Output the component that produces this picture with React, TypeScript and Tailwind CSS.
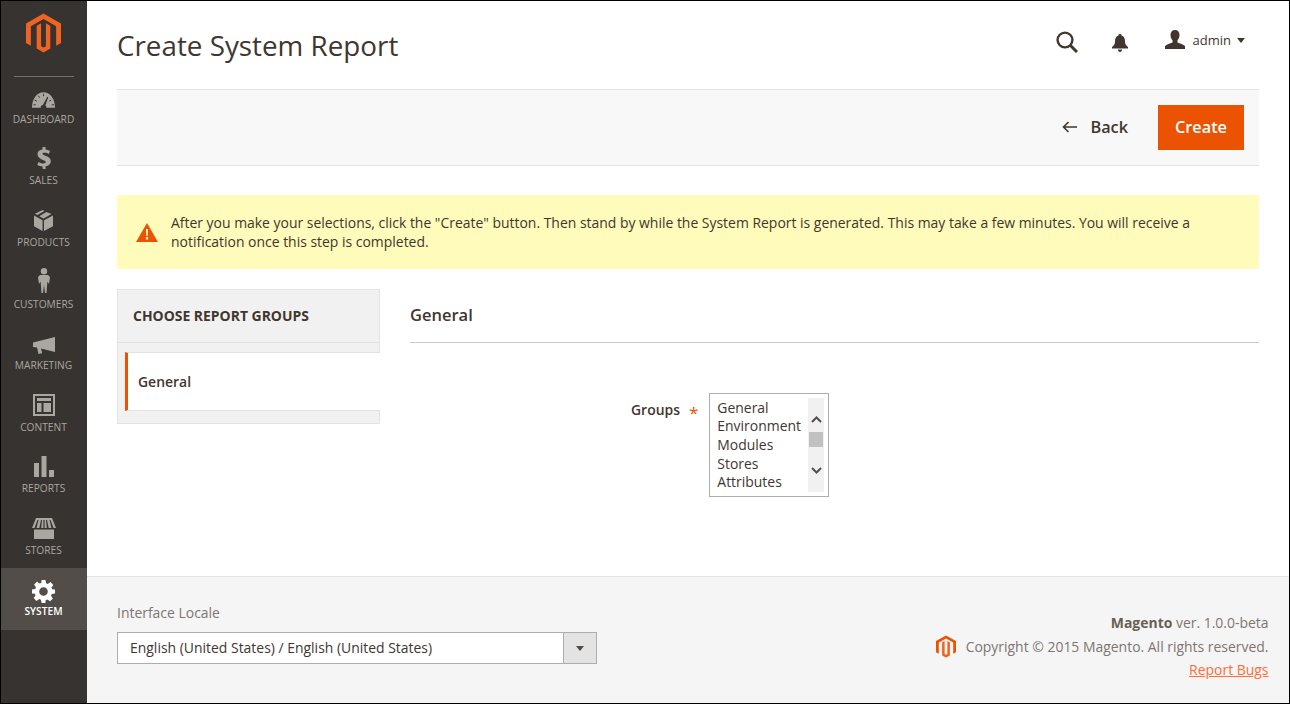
import type { ReactNode } from "react";

const Logo = ({ className, c1 = "#f26322", c2 = "#f26322" }: { className: string; c1?: string; c2?: string }) => (
  <svg viewBox="0 0 36 40" className={className}>
    <path fill={c1} d="M18 0 36 10.2V30.2L31 33V13L18 5.6 5 13V33L0 30.2V10.2Z" />
    <path fill={c2} d="M18 40 11 36V12.5L15.5 10V33.6L18 35 20.5 33.6V10L25 12.5V36Z" />
  </svg>
);

const iconGray = "#aaa6a0";

const navItems: { label: string; h: string; icon: ReactNode }[] = [
  {
    label: "DASHBOARD",
    h: "h-[60px]",
    icon: (
      <svg viewBox="0 0 24 16" className="w-[23px] h-[16px]" fill={iconGray}>
        <path d="M0 16C0 7 5 0 12 0s12 7 12 16H15c0-1-.4-2-1-2.4L17 5l-1-.4-4.600 8.500C9.800 13.400 9 14.600 9 16Z" />
        <g stroke="#373330" strokeWidth="1">
          <path d="M12 1.500v2.500M6.500 3.500 8 5.500M2.800 8 5 9.300M1.500 13H4M20 8l-2 1.200M20.500 13H23" />
        </g>
      </svg>
    ),
  },
  {
    label: "SALES",
    h: "h-[61px]",
    icon: (
      <svg viewBox="0 0 14 22" className="w-[14px] h-[22px]" fill={iconGray}>
        <path d="M5.500 0h3v2.600c1.800.2 3.400.7 4.500 1.400l-1.100 3C10.600 6.200 9 5.700 7.500 5.700c-1.300 0-2 .4-2 1.100 0 .8.900 1.200 3 1.900 3.600 1.200 5.300 2.700 5.300 5.500 0 2.700-1.800 4.600-5.200 5.100V22h-3v-2.500c-2-.1-4-.7-5.300-1.500l1.100-3.100c1.400.8 3.200 1.500 5 1.500 1.500 0 2.400-.5 2.400-1.400 0-.9-.9-1.400-3.100-2.100C2.400 11.300.5 9.900.5 7.200.5 4.800 2.200 3 5.500 2.600Z" />
      </svg>
    ),
  },
  {
    label: "PRODUCTS",
    h: "h-[62px]",
    icon: (
      <svg viewBox="0 0 20 22" className="w-[19px] h-[21px]" fill={iconGray}>
        <path d="M9 0 1 3.800l2.500 1.500L11 1ZM13 2 5.500 6.400 10 9l8.500-4.900ZM0 5.800V17l9 5V10.700ZM20 5.800l-9.500 5V22l9.500-5Z" />
      </svg>
    ),
  },
  {
    label: "CUSTOMERS",
    h: "h-[62px]",
    icon: (
      <svg viewBox="0 0 12 25" className="w-[12px] h-[25px]" fill={iconGray}>
        <circle cx="6" cy="3.200" r="3.200" />
        <path d="M2 7h8l2 2-1 7-1.600-2.500L8.500 25H7l-1-8-1 8H3.500L2.600 13.500 1 16 0 9Z" />
      </svg>
    ),
  },
  {
    label: "MARKETING",
    h: "h-[61px]",
    icon: (
      <svg viewBox="0 0 22 17" className="w-[22px] h-[17px]" fill={iconGray}>
        <path d="M22 0v15L8 11.500l1.200 4.800-3.700.7L4 10.600 0 10V5.500Z" />
      </svg>
    ),
  },
  {
    label: "CONTENT",
    h: "h-[62px]",
    icon: (
      <svg viewBox="0 0 22 22" className="w-[22px] h-[22px]" fill={iconGray}>
        <path
          fillRule="evenodd"
          d="M0 0h22v22H0ZM2 2v18h18V2ZM4 4h14v3H4ZM4 9h4.500v9H4ZM10.500 9H18v9h-7.500Z"
        />
      </svg>
    ),
  },
  {
    label: "REPORTS",
    h: "h-[61px]",
    icon: (
      <svg viewBox="0 0 20 21" className="w-[20px] h-[21px]" fill={iconGray}>
        <path d="M0 7h5v14H0ZM7.500 0h5v21h-5ZM15 14h5v7h-5Z" />
      </svg>
    ),
  },
  {
    label: "STORES",
    h: "h-[62px]",
    icon: (
      <svg viewBox="0 0 24 21" className="w-[24px] h-[21px]" fill={iconGray}>
        <path d="M4 0h16l4 10h-2.500L18.500 2h-1l2 8h-2.800L15 2h-1l.8 8h-2.200V2h-1.200v8H9.200L10 2H9L7.300 10H4.500l2-8h-1l-3 8H0ZM2 11.500h20V21H2Z" />
      </svg>
    ),
  },
];

const Gear = () => (
  <svg viewBox="0 0 24 24" className="w-[23px] h-[23px]" fill="#ffffff">
    <path
      fillRule="evenodd"
      d="M10 0h4l.7 3.400 1.700.7 2.900-1.900 2.900 2.900-1.900 2.900.7 1.700L24 10v4l-3.400.7-.7 1.700 1.900 2.900-2.900 2.900-2.900-1.900-1.700.7L14 24h-4l-.7-3.400-1.700-.7-2.900 1.900-2.900-2.900 1.900-2.900-.7-1.700L0 14v-4l3.400-.7.7-1.700-1.900-2.900 2.900-2.900 2.900 1.900 1.700-.7ZM12 7.500a4.500 4.500 0 1 0 0 9 4.500 4.500 0 0 0 0-9Z"
    />
  </svg>
);

const groups = ["General", "Environment", "Modules", "Stores", "Attributes"];

export default function App() {
  return (
    <div className="w-[1290px] h-[704px] border border-black flex bg-white overflow-hidden font-['Open_Sans',sans-serif] text-[#41362f]">
      <aside className="w-[86px] shrink-0 bg-[#373330] flex flex-col">
        <div className="h-[76px] mx-[13px] border-b border-[#736e69] flex justify-center pt-[12px] pr-[1px]">
          <Logo className="w-[35px] h-[40px]" />
        </div>
        <nav className="flex flex-col">
          {navItems.map((item) => (
            <div key={item.label} className={`${item.h} flex flex-col items-center justify-end pb-[10px] pr-[1px]`}>
              <div className="flex items-end justify-center">{item.icon}</div>
              <span className="text-[10.200px] leading-[16px] text-[#aaa6a0] mt-[3px]">{item.label}</span>
            </div>
          ))}
          <div className="h-[62px] bg-[#524d49] flex flex-col items-center pt-[12px] pr-[1px]">
            <Gear />
            <span className="text-[10.200px] leading-[16px] text-white font-semibold">SYSTEM</span>
          </div>
        </nav>
      </aside>

      <div className="flex-1 flex flex-col min-w-0">
        <main className="flex-1 px-[30px]">
          <header className="h-[88px] flex items-start justify-between">
            <h1 className="text-[27.800px] leading-[38px] mt-[25px] text-[#41362f]">Create System Report</h1>
            <div className="flex items-center mt-[28px] mr-[14px]">
              <svg viewBox="0 0 22 22" className="w-[22px] h-[22px] mt-[2px]" fill="none" stroke="#41362f" strokeWidth="2.400">
                <circle cx="9" cy="9" r="7.400" />
                <path d="m14.500 14.500 6.500 6.500" strokeWidth="3" />
              </svg>
              <svg viewBox="0 0 16 18" className="w-[16px] h-[18px] ml-[34px] mt-[3px]" fill="#41362f">
                <path d="M8 0c1 0 1.500.6 1.500 1.400 2.600.7 3.500 3 3.500 6 0 2.600 1 3.900 3 5.600v1.500H0V13c2-1.700 3-3 3-5.600 0-3 .9-5.300 3.500-6C6.500.6 7 0 8 0ZM6 15.500h4C10 17 9.200 18 8 18s-2-1-2-2.500Z" />
              </svg>
              <svg viewBox="0 0 20 20" className="w-[20px] h-[20px] ml-[37px] mb-[2px]" fill="#41362f">
                <path d="M10 0c3 0 4.500 2 4.500 5 0 2.200-.8 4-2 5.300v2.200c2.500 1.200 6 1.800 7.500 3.500V19H0v-3c1.500-1.700 5-2.300 7.500-3.500v-2.200C6.300 9 5.500 7.200 5.500 5c0-3 1.500-5 4.500-5Z" />
              </svg>
              <span className="text-[13px] leading-[18px] ml-[8px] mb-[2px] text-[#41362f]">admin</span>
              <span className="ml-[6px] mb-[2px] w-0 h-0 border-x-[4px] border-x-transparent border-t-[5px] border-t-[#41362f]" />
            </div>
          </header>

          <div className="h-[77px] bg-[#f8f8f8] border-y border-[#e3e3e3] flex items-center justify-end pr-[15px]">
            <svg viewBox="0 0 15 12" className="w-[15px] h-[12px] mb-[2px]" fill="none" stroke="#41362f" strokeWidth="1.600">
              <path d="M15 6H1.500M6.500 1 1.500 6l5 5" />
            </svg>
            <span className="ml-[13px] pb-[1px] text-[16.300px] font-semibold text-[#41362f] mr-[30px]">Back</span>
            <button className="w-[86px] h-[45px] pb-[1px] bg-[#eb5202] text-white text-[16.300px] font-semibold">Create</button>
          </div>

          <div className="mt-[29px] h-[74px] bg-[#fffbbb] flex items-center pl-[19px] pr-[40px]">
            <svg viewBox="0 0 22 19" className="w-[22px] h-[19px] shrink-0">
              <path fill="#eb5202" d="M11 0 22 19H0Z" />
              <path fill="#fffbbb" d="M9.900 6h2.200l-.4 7h-1.400ZM9.900 14h2.200v2.400H9.900Z" />
            </svg>
            <p className="ml-[13px] text-[13.950px] leading-[19px] text-[#41362f]">
              After you make your selections, click the "Create" button. Then stand by while the System Report is generated. This may take a few minutes. You will receive a notification once this step is completed.
            </p>
          </div>

          <div className="mt-[20px] flex">
            <div className="w-[263px] shrink-0 h-[135px] bg-[#f1f1f1] border border-[#e3e3e3] flex flex-col">
              <div className="h-[53px] flex items-center pl-[15px] text-[13.950px] font-bold text-[#41362f] border-b border-[#e3e3e3]">
                CHOOSE REPORT GROUPS
              </div>
              <div className="mt-[9px] ml-[7px] -mr-[1px] h-[59px] pt-[2px] bg-white border-l-[3px] border-[#eb5202] border-y border-y-[#e3e3e3] flex items-center pl-[10px] text-[13.950px] font-semibold text-[#41362f]">
                General
              </div>
            </div>

            <div className="ml-[30px] flex-1">
              <div className="h-[54px] border-b border-[#c9c9c9] flex items-start pt-[14px]">
                <h2 className="text-[16.500px] leading-[24px] font-semibold text-[#41362f]">General</h2>
              </div>
              <div className="mt-[50px] flex items-start pl-[221px]">
                <span className="text-[13.950px] leading-[19px] font-semibold mt-[7px]">Groups</span>
                <span className="text-[17px] leading-[19px] text-[#eb5202] ml-[9px] mt-[10px]">*</span>
                <div className="ml-[11px] w-[120px] h-[104px] border border-[#adadad] flex pl-[7px] pt-[4px] pr-[4px]">
                  <ul className="flex-1 text-[13.950px] leading-[18.700px] pt-[0.500px] text-[#41362f]">
                    {groups.map((g) => (
                      <li key={g}>{g}</li>
                    ))}
                  </ul>
                  <div className="w-[16px] h-[94px] bg-[#f1f1f1] flex flex-col items-center">
                    <svg viewBox="0 0 11 7" className="w-[11px] h-[7px] mt-[18px]" fill="none" stroke="#505050" strokeWidth="2">
                      <path d="M1 6 5.500 1.500 10 6" />
                    </svg>
                    <div className="w-[14px] h-[15px] bg-[#c1c1c1] mt-[9px]" />
                    <svg viewBox="0 0 11 7" className="w-[11px] h-[7px] mt-[20px]" fill="none" stroke="#505050" strokeWidth="2">
                      <path d="M1 1 5.500 5.500 10 1" />
                    </svg>
                  </div>
                </div>
              </div>
            </div>
          </div>
        </main>

        <footer className="h-[127px] shrink-0 bg-[#f5f5f5] border-t border-[#e3e3e3] pl-[30px] pr-[20.500px] flex justify-between">
          <div className="pt-[26px]">
            <div className="text-[13.950px] leading-[19px] text-[#7d7671]">Interface Locale</div>
            <div className="mt-[10px] w-[480px] h-[32px] bg-white border border-[#adadad] flex">
              <span className="flex-1 pl-[12px] text-[13.950px] leading-[30px] text-[#41362f]">
                English (United States) / English (United States)
              </span>
              <span className="w-[33px] bg-[#e3e3e3] border-l border-[#adadad] flex items-center justify-center">
                <span className="w-0 h-0 border-x-[4px] border-x-transparent border-t-[5px] border-t-[#514943]" />
              </span>
            </div>
          </div>
          <div className="pt-[36px] flex flex-col items-end text-[13.950px] leading-[19px] text-[#7d7671]">
            <div>
              <b className="text-[#676056]">Magento</b> ver. 1.0.0-beta
            </div>
            <div className="flex items-center mt-[3px]">
              <Logo className="w-[20px] h-[23px] mr-[10px]" c1="#eb5202" />
              Copyright © 2015 Magento. All rights reserved.
            </div>
            <a className="mt-[2px] text-[#ff6d3a] underline">Report Bugs</a>
          </div>
        </footer>
      </div>
    </div>
  );
}
